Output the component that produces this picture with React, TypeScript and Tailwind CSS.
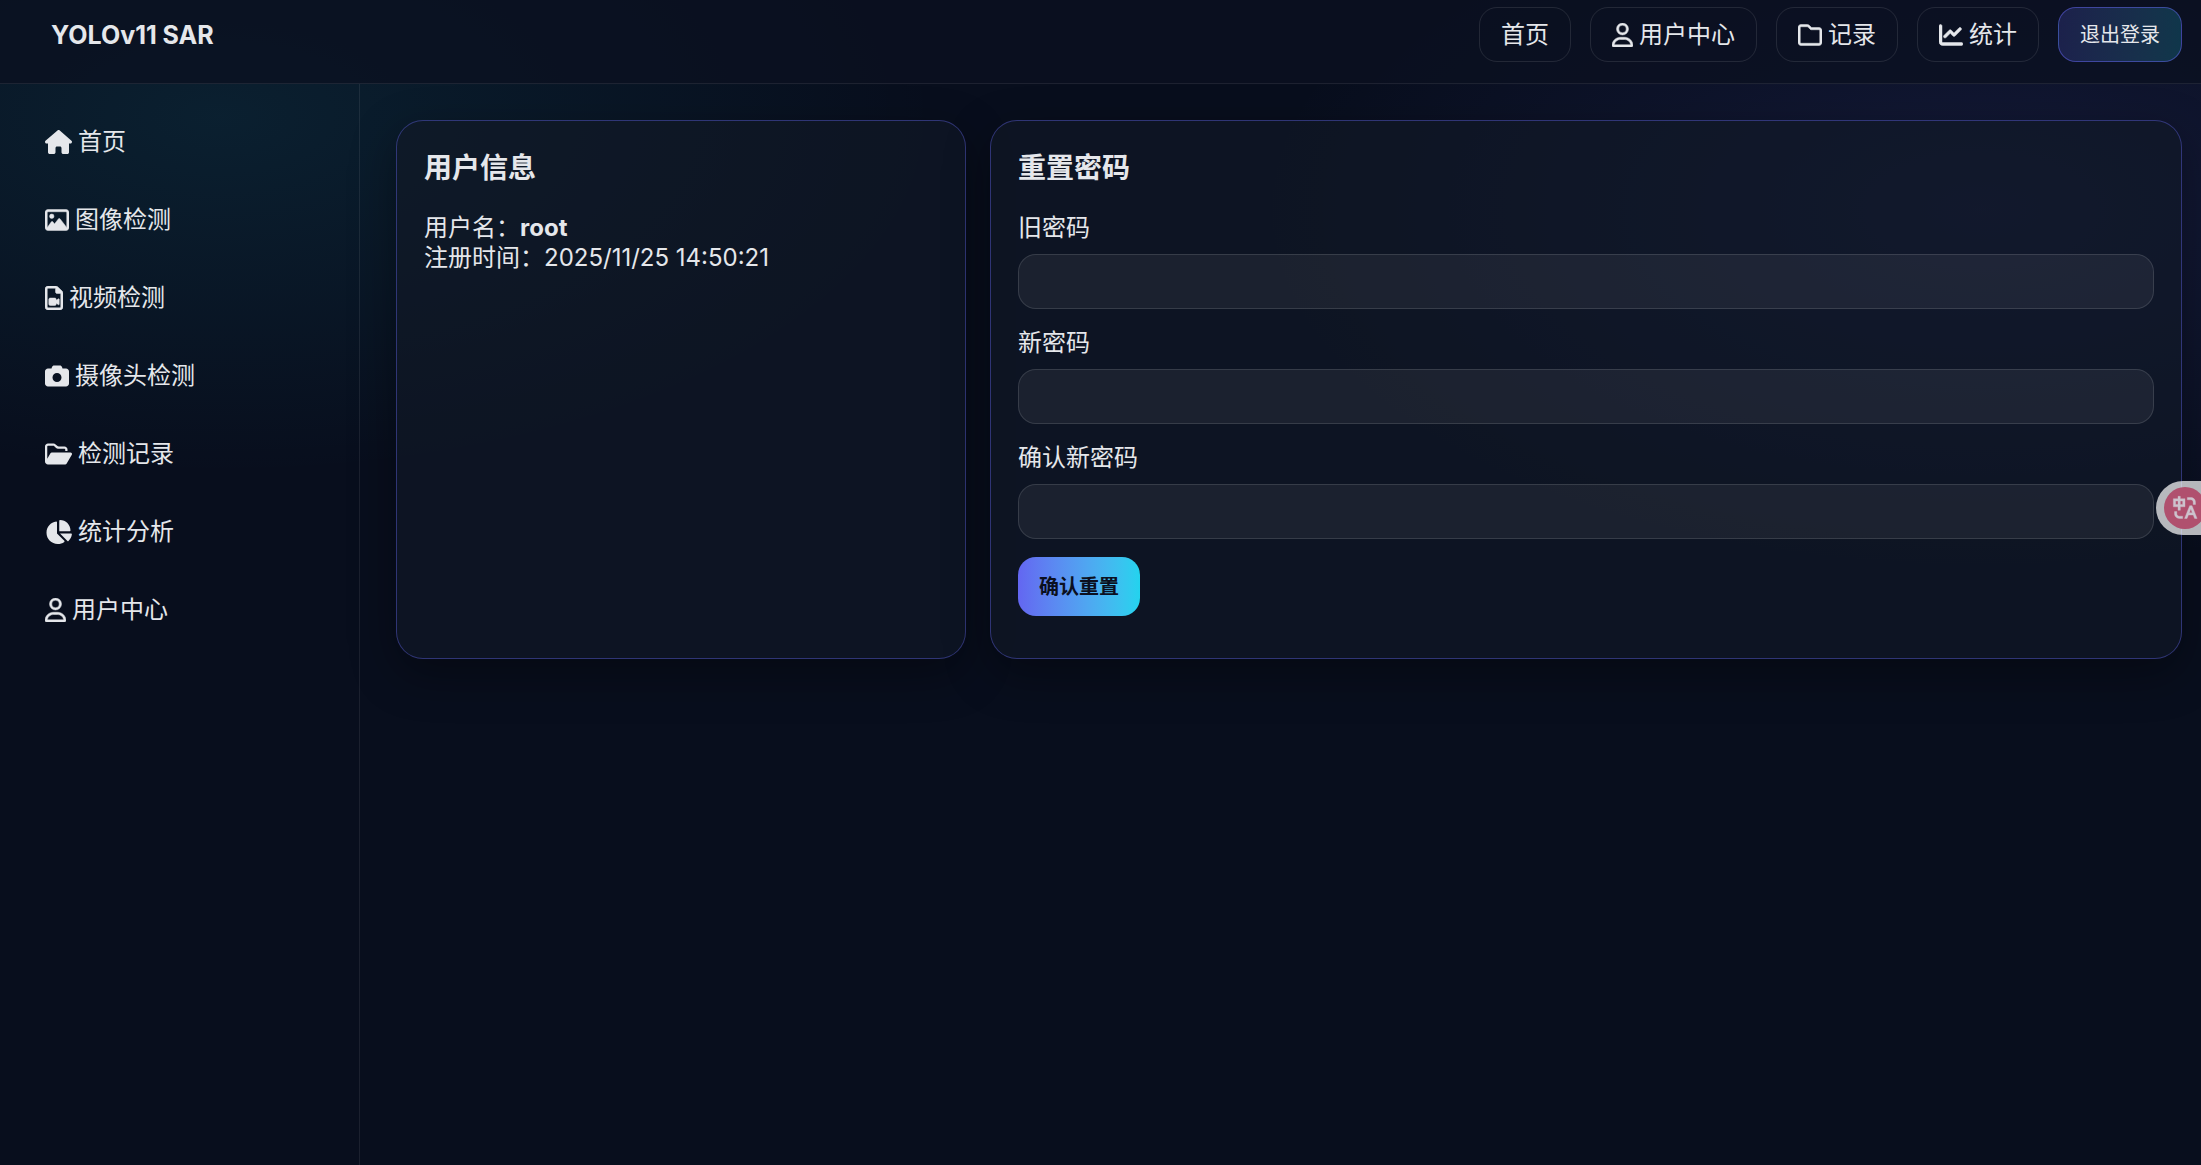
import { FormEvent, ReactNode } from 'react';
import {
  FaCamera,
  FaChartLine,
  FaChartPie,
  FaHouse,
  FaRegFileVideo,
  FaRegFolder,
  FaRegImage,
  FaRegUser,
} from 'react-icons/fa6';
import { RiTranslate } from 'react-icons/ri';

// outlined back, solid front flap
function FolderOpenIcon() {
  return (
    <svg aria-hidden="true" fill="currentColor" height="24" viewBox="0 0 576 512" width="27">
      <path d="M384 480h48c11.400 0 21.900-6 27.600-15.900l112-192c5.800-9.900 5.800-22.100.1-32.100S555.500 224 544 224H144c-11.400 0-21.900 6-27.600 15.900L48 357.100V96c0-8.800 7.200-16 16-16h117.500c4.200 0 8.300 1.700 11.300 4.700l26.500 26.500c21 21 49.500 32.800 79.200 32.800H416c8.800 0 16 7.200 16 16v32h48v-32c0-35.300-28.700-64-64-64H298.500c-17 0-33.300-6.700-45.300-18.700l-26.500-26.600c-12-12-28.300-18.700-45.300-18.700H64C28.700 32 0 60.700 0 96v320c0 35.300 28.700 64 64 64h320z" />
    </svg>
  );
}

const sideLinks = [
  { label: '首页', icon: <FaHouse size={24} className="w-[27px]" /> },
  { label: '图像检测', icon: <FaRegImage size={24} className="stroke-10" /> },
  { label: '视频检测', icon: <FaRegFileVideo size={24} className="w-[18px] stroke-10" /> },
  { label: '摄像头检测', icon: <FaCamera size={24} /> },
  { label: '检测记录', icon: <FolderOpenIcon /> },
  { label: '统计分析', icon: <FaChartPie size={24} className="w-[27px]" /> },
  { label: '用户中心', icon: <FaRegUser size={24} className="w-[21px] stroke-10" /> },
];

const topLinks = [
  { label: '首页', icon: null },
  { label: '用户中心', icon: <FaRegUser size={24} className="w-[21px] stroke-10" /> },
  { label: '记录', icon: <FaRegFolder size={24} className="stroke-10" /> },
  { label: '统计', icon: <FaChartLine size={24} className="stroke-10" /> },
];

const fields = [
  { id: 'old-password', label: '旧密码' },
  { id: 'new-password', label: '新密码' },
  { id: 'confirm-password', label: '确认新密码' },
];

function Card({ title, children }: { title: string; children: ReactNode }) {
  return (
    <section className="rounded-[27px] border border-[#6366f1]/40 bg-[#111827]/65 px-[27px] pt-[29px] pb-[42px] shadow-[0_15px_45px_rgba(0,0,0,0.35)]">
      <h3 className="text-[28px] leading-9 font-bold">{title}</h3>
      <div className="mt-[27px]">{children}</div>
    </section>
  );
}

export default function App() {
  function handleSubmit(event: FormEvent<HTMLFormElement>) {
    event.preventDefault();
  }

  return (
    <div className="flex min-h-screen flex-col bg-[#080e1d] bg-[radial-gradient(900px_450px_at_10%_10%,rgba(34,211,238,0.09),transparent_80%),radial-gradient(900px_450px_at_90%_18%,rgba(99,102,241,0.13),transparent_80%)] font-['Inter','Noto_Sans_CJK_SC',sans-serif] text-2xl leading-[30px] text-[#e5e7eb]">
      <header className="flex h-21 items-start justify-between border-b border-white/8 bg-[#0b1020]/75 pt-[7px] pr-[19px] pl-[51px]">
        <div className="flex h-[55px] items-center text-[25px] font-bold">YOLOv11 SAR</div>
        <nav className="flex gap-[19px]">
          {topLinks.map((link) => (
            <a
              className="flex h-[55px] items-center gap-1.5 rounded-[18px] border border-white/10 px-[21px] hover:bg-white/5"
              href="#"
              key={link.label}
            >
              {link.icon}
              {link.label}
            </a>
          ))}
          <button
            className="h-[55px] rounded-[18px] border border-[#6366f1]/50 bg-linear-to-r from-[#6366f1]/20 to-[#22d3ee]/20 px-[21px] text-xl"
            type="button"
          >
            退出登录
          </button>
        </nav>
      </header>

      <div className="flex flex-1">
        <aside className="w-90 shrink-0 border-r border-white/8 px-[45px] pt-7">
          <nav className="grid gap-[18px]">
            {sideLinks.map((link) => (
              <a className="flex h-15 items-center gap-1.5" href="#" key={link.label}>
                {link.icon}
                {link.label}
              </a>
            ))}
          </nav>
        </aside>

        <main className="grid flex-1 grid-cols-[570px_1fr] content-start gap-6 pt-9 pr-[19px] pl-9">
          <Card title="用户信息">
            <p>
              用户名：<strong className="font-bold">root</strong>
            </p>
            <p>注册时间：2025/11/25 14:50:21</p>
          </Card>

          <Card title="重置密码">
            <form onSubmit={handleSubmit}>
              <div className="grid gap-[19px]">
                {fields.map((field) => (
                  <div key={field.id}>
                    <label className="block" htmlFor={field.id}>
                      {field.label}
                    </label>
                    <input
                      className="mt-[11px] block h-[55px] w-full rounded-[18px] border border-white/12 bg-white/6 px-[18px] outline-none focus:border-[#6366f1]"
                      id={field.id}
                      type="password"
                    />
                  </div>
                ))}
              </div>
              <button
                className="mt-[18px] block h-[59px] rounded-[18px] bg-linear-to-r from-[#6366f1] to-[#22d3ee] px-[21px] text-xl font-semibold text-[#0b1020]"
                type="submit"
              >
                确认重置
              </button>
            </form>
          </Card>
        </main>
      </div>

      {/* translate toggle, docked half way into the right edge */}
      <button
        aria-label="翻译"
        className="fixed top-[481px] right-0 flex h-[54px] w-[45px] items-center rounded-l-full bg-white/70 pl-2"
        type="button"
      >
        <span className="flex h-[42px] w-[42px] shrink-0 items-center justify-center rounded-full bg-[#b0506e]">
          <RiTranslate className="stroke-[0.3] text-[#cdc3cd]" size={28} />
        </span>
      </button>
    </div>
  );
}
